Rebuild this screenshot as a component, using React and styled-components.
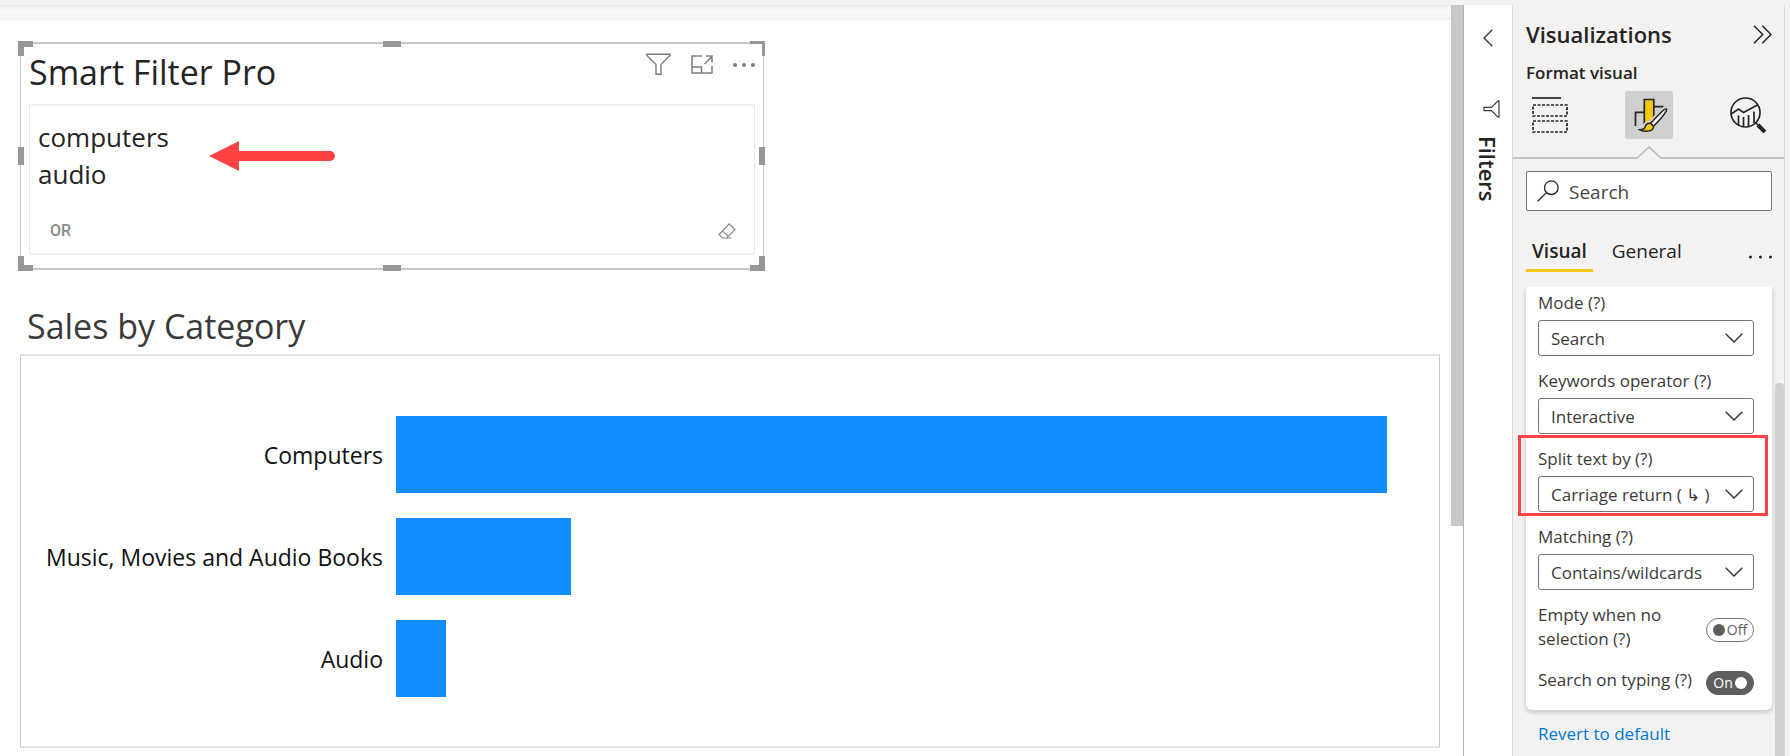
import React, { useState } from 'react';
import styled, { createGlobalStyle, css } from 'styled-components';

const GlobalStyle = createGlobalStyle`
    *,
    *::before,
    *::after {
        box-sizing: border-box;
    }
    body {
        margin: 0;
        background: #fff;
        color: #252423;
        font-family: 'Open Sans', 'Noto Sans', sans-serif;
    }
    button,
    input,
    select,
    textarea {
        margin: 0;
        color: inherit;
        font-family: inherit;
    }
    svg {
        display: block;
    }
`;

const Page = styled.div`
    display: flex;
    flex-direction: column;
    height: 100vh;
    overflow: hidden;
`;

const TopStrip = styled.div`
    flex: none;
    height: 5px;
    background: #f3f2f1;
`;

const Workspace = styled.div`
    display: flex;
    flex: 1;
    min-height: 0;
`;

/* report canvas */

const Canvas = styled.main`
    flex: 1;
    min-width: 0;
    overflow: hidden;
`;

const CanvasShade = styled.div`
    height: 15px;
    background: linear-gradient(#e9e9e9, #f7f7f7 4px, #fbfbfb 8px, #f0f0f0);
`;

const Report = styled.div`
    padding: 22px 11px 8px 20px;
`;

const VisualRow = styled.div`
    display: grid;
    grid-template-columns: 11fr 10fr;
`;

const Visual = styled.section`
    position: relative;
    border: 1px solid #c8c8c8;
    border-width: 2px 1px;
    padding: 4px 8px 13px;
`;

const edges = {
    nw: css`
        top: -3px;
        left: -3px;
        border-width: 6px 0 0 6px;
    `,
    ne: css`
        top: -3px;
        right: -2px;
        border-width: 3px 3px 0 0;
    `,
    sw: css`
        bottom: -3px;
        left: -3px;
        border-width: 0 0 6px 6px;
    `,
    se: css`
        right: -2px;
        bottom: -3px;
        border-width: 0 6px 6px 0;
    `,
    n: css`
        top: -3px;
        left: calc(50% - 9px);
        width: 18px;
        border-width: 6px 0 0;
    `,
    s: css`
        bottom: -3px;
        left: calc(50% - 9px);
        width: 18px;
        border-width: 6px 0 0;
    `,
    w: css`
        top: calc(50% - 9px);
        left: -3px;
        height: 18px;
        border-width: 0 0 0 6px;
    `,
    e: css`
        top: calc(50% - 9px);
        right: -2px;
        height: 18px;
        border-width: 0 0 0 6px;
    `,
};

const Handle = styled.span`
    position: absolute;
    width: ${props => (props.$edge === 'w' || props.$edge === 'e' ? '6px' : '15px')};
    height: ${props => (props.$edge === 'n' || props.$edge === 's' ? '6px' : '15px')};
    border: 0 solid #979797;
    ${props => edges[props.$edge]}
`;

const VisualHeader = styled.header`
    display: flex;
    justify-content: space-between;
    align-items: flex-start;
    height: 56px;
`;

const VisualTitle = styled.h2`
    margin: 0;
    font-size: 34px;
    font-weight: 400;
    line-height: 48px;
`;

const HeaderTools = styled.div`
    display: flex;
    align-items: center;
    gap: 20px;
    padding-top: 5px;
`;

const IconButton = styled.button`
    display: flex;
    padding: 0;
    border: 0;
    background: none;
    cursor: pointer;
`;

const FilterBox = styled.div`
    position: relative;
    border: 1px solid #e8e8e8;
    border-width: 2px 1px;
    border-top-color: #f1f1f1;
    border-bottom-color: #f1f1f1;
    padding: 13px 8px 4px;
`;

const Keywords = styled.textarea`
    display: block;
    width: 100%;
    height: 94px;
    padding: 0;
    border: 0;
    outline: 0;
    background: none;
    resize: none;
    font-size: 26px;
    line-height: 37px;
`;

const FilterFooter = styled.div`
    display: flex;
    justify-content: space-between;
    align-items: center;
    height: 36px;
    padding: 0 10px 0 12px;
`;

const OperatorButton = styled.button`
    padding: 0;
    border: 0;
    background: none;
    color: #8a8a8a;
    font-family: Roboto, sans-serif;
    font-size: 16px;
    font-weight: 500;
    line-height: 20px;
    cursor: pointer;
`;

const Arrow = styled.svg`
    position: absolute;
    top: 35px;
    left: 179px;
`;

const ChartTitle = styled.h2`
    margin: 30px 0 0;
    padding: 0 0 2px 7px;
    color: #3a3a3a;
    font-size: 34px;
    font-weight: 400;
    line-height: 52px;
`;

const Chart = styled.div`
    display: flex;
    flex-direction: column;
    gap: 25px;
    border: 1px solid #c8c8c8;
    border-width: 2px 1px;
    border-top-color: #e3e3e3;
    border-bottom-color: #e3e3e3;
    padding: 60px 52px 49px 0;
`;

const BarRow = styled.div`
    display: grid;
    grid-template-columns: 375px 1fr;
    align-items: center;
`;

const BarLabel = styled.span`
    padding-right: 13px;
    color: #111;
    font-size: 23px;
    line-height: 32px;
    text-align: right;
`;

const Bar = styled.div`
    height: 77px;
    background: #118dff;
`;

const CanvasScroll = styled.div`
    flex: none;
    width: 13px;
    border-right: 1px solid #b3b3b3;
`;

const CanvasThumb = styled.div`
    height: 69.4%;
    background: #c8c8c8;
`;

/* collapsed filters pane */

const FiltersPane = styled.aside`
    display: flex;
    flex: none;
    flex-direction: column;
    align-items: center;
    width: 48px;
    padding: 24px 1px 0 0;
`;

const FiltersLabel = styled.span`
    margin-top: 18px;
    font-size: 22px;
    font-weight: 600;
    line-height: 24px;
    writing-mode: vertical-rl;
`;

const FunnelButton = styled(IconButton)`
    margin-top: 53px;
    padding-left: 8px;
`;

/* visualizations pane */

const VizPane = styled.aside`
    display: flex;
    flex: none;
    flex-direction: column;
    width: 273px;
    border: 1px solid #dad8d6;
    border-width: 0 1px;
    background: #f3f2f1;
`;

const PaneEdge = styled.div`
    flex: none;
    width: 5px;
    background: #f3f2f1;
`;

const PaneHead = styled.div`
    padding: 13px 12px 0 13px;
`;

const PaneTitleRow = styled.div`
    display: flex;
    justify-content: space-between;
    align-items: center;
`;

const PaneTitle = styled.h1`
    margin: 0;
    font-size: 22px;
    font-weight: 600;
    line-height: 32px;
`;

const PaneSubtitle = styled.div`
    margin-top: 11px;
    font-size: 17px;
    font-weight: 600;
    line-height: 24px;
`;

const ModeBar = styled.div`
    display: flex;
    justify-content: space-between;
    margin-top: 6px;
`;

const ModeButton = styled(IconButton)`
    justify-content: center;
    align-items: center;
    width: 48px;
    height: 48px;
    border-radius: 2px;
    background: ${props => (props.$active ? '#d0cfce' : 'none')};
`;

const Divider = styled.div`
    display: flex;
    align-items: flex-end;
    margin-top: 7px;

    &::before,
    &::after {
        content: '';
        flex: 1;
        height: 2px;
        background: #c4c2c0;
    }
`;

const SearchBox = styled.label`
    display: flex;
    align-items: center;
    gap: 10px;
    height: 40px;
    margin: 12px 12px 0 13px;
    padding: 0 10px;
    border: 1px solid #767676;
    border-radius: 2px;
    background: #fff;
`;

const SearchInput = styled.input`
    flex: 1;
    min-width: 0;
    padding: 2px 0 0;
    border: 0;
    outline: 0;
    background: none;
    font-size: 19px;
    line-height: 26px;

    &::placeholder {
        color: #484644;
        opacity: 1;
    }
`;

const Tabs = styled.div`
    display: flex;
    align-items: flex-start;
    margin: 26px 12px 0 13px;
`;

const Tab = styled.button`
    margin-right: 13px;
    padding: 0 6px 4px;
    border: 0;
    border-bottom: 3px solid ${props => (props.$active ? '#f2c811' : 'transparent')};
    background: none;
    font-size: 19px;
    font-weight: ${props => (props.$active ? 600 : 400)};
    line-height: 28px;
    cursor: pointer;
`;

const MoreButton = styled(IconButton)`
    margin: 17px 0 0 auto;
`;

const Scroller = styled.div`
    display: flex;
    flex: 1;
    min-height: 0;
    margin-top: 15px;
    overflow: hidden;
`;

const Settings = styled.div`
    flex: 1;
    padding: 0 3px 0 13px;
`;

const ScrollTrack = styled.div`
    display: flex;
    width: 9px;
    padding-top: 96px;
`;

const ScrollThumb = styled.div`
    flex: 1;
    border-radius: 4px 4px 0 0;
    background: #d2d0ce;
`;

const Card = styled.div`
    padding: 4px 18px 1px 12px;
    border-radius: 0 0 6px 6px;
    background: #fff;
    box-shadow: 0 2px 5px rgba(0, 0, 0, 0.2);
    color: #3b3a39;
    font-size: 17px;
    line-height: 24px;
`;

const Field = styled.div`
    position: relative;
    display: flex;
    flex-direction: column;
    gap: 5px;
    margin-bottom: 13px;
`;

const SelectWrap = styled.div`
    display: grid;
    align-items: center;

    > * {
        grid-area: 1 / 1;
    }
    > svg {
        justify-self: end;
        margin-right: 11px;
        pointer-events: none;
    }
`;

const Select = styled.select`
    width: 100%;
    height: 36px;
    padding: 0 32px 0 12px;
    border: 1px solid #767676;
    border-radius: 3px;
    background: #fff;
    font-size: 17px;
    appearance: none;
`;

const Highlight = styled.span`
    position: absolute;
    inset: -12px -14px -4px -20px;
    border: 3px solid #ff4343;
    pointer-events: none;
`;

const ToggleRow = styled.div`
    display: flex;
    justify-content: space-between;
    align-items: center;
    gap: 8px;
    margin-bottom: 14px;
`;

const Switch = styled.label`
    flex: none;
    padding-top: 6px;
    cursor: pointer;
`;

const SwitchInput = styled.input`
    position: absolute;
    opacity: 0;
`;

const SwitchTrack = styled.span`
    display: flex;
    flex-direction: ${props => (props.$on ? 'row-reverse' : 'row')};
    justify-content: center;
    align-items: center;
    gap: 2px;
    width: 48px;
    height: 24px;
    border: 1px solid ${props => (props.$on ? '#605e5c' : '#767676')};
    border-radius: 12px;
    background: ${props => (props.$on ? '#605e5c' : '#fff')};
    color: ${props => (props.$on ? '#fff' : '#605e5c')};
    font-size: 14px;

    &::before {
        content: '';
        width: 12px;
        height: 12px;
        border-radius: 50%;
        background: currentColor;
    }
`;

const RevertLink = styled.a`
    display: inline-block;
    margin: 12px 0 0 12px;
    color: #0078d4;
    font-size: 17px;
    line-height: 24px;
    text-decoration: none;
`;

const categories = [
    { name: 'Computers', share: 100 },
    { name: 'Music, Movies and Audio Books', share: 17.7 },
    { name: 'Audio', share: 5 },
];

const fields = [
    { id: 'mode', label: 'Mode (?)', options: ['Search', 'Filter'] },
    { id: 'operator', label: 'Keywords operator (?)', options: ['Interactive', 'AND', 'OR'] },
    { id: 'split', label: 'Split text by (?)', options: ['Carriage return ( ↳ )', 'Comma'], marked: true },
    { id: 'matching', label: 'Matching (?)', options: ['Contains/wildcards', 'Exact'] },
];

const FunnelIcon = () => (
    <svg width='25' height='23' viewBox='0 0 25 23' fill='none' stroke='#7c7c7c' strokeWidth='1.4'>
        <path d='M1 1.2h23v1.3l-9 9V21.3h-5V11.5l-9-9z' />
    </svg>
);

const FocusIcon = () => (
    <svg width='22' height='19' viewBox='0 0 22 19' fill='none' stroke='#7c7c7c' strokeWidth='1.5'>
        <path d='M11 1H1v17h20v-7M1 12h9.500v6M13.500 9 21 1.500M15 1h6v6.500' />
    </svg>
);

const DotsIcon = ({ color, r, w }) => (
    <svg width={w} height='6' viewBox={`0 0 ${w} 6`} fill={color}>
        <circle cx={r} cy='3' r={r} />
        <circle cx={w / 2} cy='3' r={r} />
        <circle cx={w - r} cy='3' r={r} />
    </svg>
);

const EraserIcon = () => (
    <svg width='18' height='16' viewBox='0 0 18 16' fill='none' stroke='#848484' strokeWidth='1.2'>
        <path d='M11.200.8 17 6.600 8.600 15H4.500L1 11.500zM4.200 7.600l6 5.800M4.500 15h9' />
    </svg>
);

const ChevronDown = () => (
    <svg width='18' height='10' viewBox='0 0 18 10' fill='none' stroke='#3b3a39' strokeWidth='1.5'>
        <path d='m.7.7 8.300 8.300L17.300.7' />
    </svg>
);

const ChevronLeft = () => (
    <svg width='10' height='18' viewBox='0 0 10 18' fill='none' stroke='#3b3a39' strokeWidth='1.4'>
        <path d='M9.300.700 1 9l8.300 8.300' />
    </svg>
);

const DoubleChevron = () => (
    <svg width='19' height='19' viewBox='0 0 19 19' fill='none' stroke='#252423' strokeWidth='1.5'>
        <path d='m1 .800 8.700 8.700L1 18.200M9.300.800 18 9.500l-8.700 8.700' />
    </svg>
);

const SideFunnelIcon = () => (
    <svg width='17' height='18' viewBox='0 0 17 18' fill='none' stroke='#3b3a39' strokeWidth='1.2'>
        <path d='M16 .8v16.400h-1L8.500 10.700H1V7.300h7.500L15 .8z' />
    </svg>
);

const SearchIcon = () => (
    <svg width='22' height='22' viewBox='0 0 22 22' fill='none' stroke='#252423' strokeWidth='1.3'>
        <circle cx='14.300' cy='7.700' r='6.800' />
        <path d='M9.400 12.600.700 21.300' />
    </svg>
);

const BuildIcon = () => (
    <svg width='36' height='36' viewBox='0 0 36 36' fill='none' stroke='#252423' strokeWidth='1.7'>
        <path d='M0 1h29' />
        <path d='M1 8h34v11H1zM1 24h34v11H1z' strokeDasharray='3 1.5' />
    </svg>
);

const FormatIcon = () => (
    <svg width='38' height='36' viewBox='-4 0 38 36' fill='none' stroke='#252423' strokeWidth='1.7'>
        <path d='M1.500 29V15.300H10M20 9.700h9.500' />
        <path d='M10.300 27V2.500h9.500V22' fill='#f2c811' />
        <path
            d='M32.600 12.200c-1-.7-2.700.3-4.600 2.300L16 26.500c-2.800 0-4.500 1.500-5 3.500-.5 1.800-2 2.700-5 2.700l13.500-3.200c5-5 10-10.700 11.700-13.900 1.200-1.700 2-2.800 1.400-3.400z'
            fill='#d0cfce'
            stroke='#d0cfce'
            strokeWidth='5'
        />
        <path
            d='M32.600 12.200c-1-.7-2.700.3-4.600 2.300L16.500 26.300l3 2.900c5-5 9.800-10.400 11.700-13.600 1.200-1.700 2-2.800 1.400-3.400z'
            fill='#f3f2f1'
            strokeWidth='1.5'
        />
        <path
            d='m19.500 29.200-3-2.900c-2.800-.2-4.700 1.200-5.200 3.400-.5 1.900-2.200 2.900-5.300 3.100 3.300 1.900 9.800 2.300 12.300-.3 1-1 1.300-2.100 1.200-3.300z'
            fill='#f2c811'
            strokeWidth='1.5'
        />
    </svg>
);

const AnalyticsIcon = () => (
    <svg width='36' height='36' viewBox='0 0 36 36' fill='none' stroke='#252423' strokeWidth='1.7'>
        <circle cx='15.500' cy='15.500' r='14.500' />
        <path d='m2 16.500 6.500-4.500 5 3.500L27.500 8M8.500 28V18.500M13.500 29.500V20M18.500 29.500V18M24 26V14.500' />
        <path d='m25.500 25.500 3 3' />
        <path d='m28 28 7 7' strokeWidth='4' />
    </svg>
);

const Notch = () => (
    <svg width='24' height='13' viewBox='0 0 24 13' fill='none' stroke='#bdbbb9' strokeWidth='1.5'>
        <path d='M0 12.200 12 .900l12 11.300' />
    </svg>
);

const SettingField = ({ id, label, options, marked }) => (
    <Field>
        <label htmlFor={id}>{label}</label>
        <SelectWrap>
            <Select id={id}>
                {options.map(option => (
                    <option key={option}>{option}</option>
                ))}
            </Select>
            <ChevronDown />
        </SelectWrap>
        {marked && <Highlight />}
    </Field>
);

const ToggleField = ({ id, label, initial }) => {
    const [is_on, setOn] = useState(initial);

    return (
        <ToggleRow>
            <label htmlFor={id}>{label}</label>
            <Switch>
                <SwitchInput id={id} type='checkbox' checked={is_on} onChange={() => setOn(!is_on)} />
                <SwitchTrack $on={is_on}>{is_on ? 'On' : 'Off'}</SwitchTrack>
            </Switch>
        </ToggleRow>
    );
};

const SmartFilter = () => (
    <Visual>
        <VisualHeader>
            <VisualTitle>Smart Filter Pro</VisualTitle>
            <HeaderTools>
                <IconButton aria-label='Filters'>
                    <FunnelIcon />
                </IconButton>
                <IconButton aria-label='Focus mode'>
                    <FocusIcon />
                </IconButton>
                <IconButton aria-label='More options'>
                    <DotsIcon color='#7c7c7c' r={2} w={22} />
                </IconButton>
            </HeaderTools>
        </VisualHeader>
        <FilterBox>
            <Keywords aria-label='Keywords' spellCheck={false} defaultValue={'computers\naudio'} />
            <FilterFooter>
                <OperatorButton>OR</OperatorButton>
                <IconButton aria-label='Clear'>
                    <EraserIcon />
                </IconButton>
            </FilterFooter>
            <Arrow width='126' height='30' viewBox='0 0 126 30' fill='#ff4343'>
                <path d='M0 15 30 0v10h91a5 5 0 0 1 0 10H30v10z' />
            </Arrow>
        </FilterBox>
        {Object.keys(edges).map(edge => (
            <Handle key={edge} $edge={edge} />
        ))}
    </Visual>
);

const App = () => {
    const [tab, setTab] = useState('Visual');

    return (
        <Page>
            <GlobalStyle />
            <TopStrip />
            <Workspace>
                <Canvas>
                    <CanvasShade />
                    <Report>
                        <VisualRow>
                            <SmartFilter />
                        </VisualRow>
                        <ChartTitle>Sales by Category</ChartTitle>
                        <Chart>
                            {categories.map(({ name, share }) => (
                                <BarRow key={name}>
                                    <BarLabel>{name}</BarLabel>
                                    <Bar style={{ width: `${share}%` }} />
                                </BarRow>
                            ))}
                        </Chart>
                    </Report>
                </Canvas>
                <CanvasScroll>
                    <CanvasThumb />
                </CanvasScroll>
                <FiltersPane>
                    <IconButton aria-label='Expand filters'>
                        <ChevronLeft />
                    </IconButton>
                    <FunnelButton aria-label='Filter'>
                        <SideFunnelIcon />
                    </FunnelButton>
                    <FiltersLabel>Filters</FiltersLabel>
                </FiltersPane>
                <VizPane>
                    <PaneHead>
                        <PaneTitleRow>
                            <PaneTitle>Visualizations</PaneTitle>
                            <IconButton aria-label='Collapse pane'>
                                <DoubleChevron />
                            </IconButton>
                        </PaneTitleRow>
                        <PaneSubtitle>Format visual</PaneSubtitle>
                        <ModeBar>
                            <ModeButton aria-label='Build visual'>
                                <BuildIcon />
                            </ModeButton>
                            <ModeButton $active aria-label='Format visual'>
                                <FormatIcon />
                            </ModeButton>
                            <ModeButton aria-label='Analytics'>
                                <AnalyticsIcon />
                            </ModeButton>
                        </ModeBar>
                    </PaneHead>
                    <Divider>
                        <Notch />
                    </Divider>
                    <SearchBox>
                        <SearchIcon />
                        <SearchInput placeholder='Search' aria-label='Search' />
                    </SearchBox>
                    <Tabs>
                        {['Visual', 'General'].map(name => (
                            <Tab key={name} $active={tab === name} onClick={() => setTab(name)}>
                                {name}
                            </Tab>
                        ))}
                        <MoreButton aria-label='More'>
                            <DotsIcon color='#252423' r={1.5} w={23} />
                        </MoreButton>
                    </Tabs>
                    <Scroller>
                        <Settings>
                            <Card>
                                {fields.map(field => (
                                    <SettingField key={field.id} {...field} />
                                ))}
                                <ToggleField id='empty' label='Empty when no selection (?)' initial={false} />
                                <ToggleField id='typing' label='Search on typing (?)' initial />
                            </Card>
                            <RevertLink href='#revert'>Revert to default</RevertLink>
                        </Settings>
                        <ScrollTrack>
                            <ScrollThumb />
                        </ScrollTrack>
                    </Scroller>
                </VizPane>
                <PaneEdge />
            </Workspace>
        </Page>
    );
};

export default App;
